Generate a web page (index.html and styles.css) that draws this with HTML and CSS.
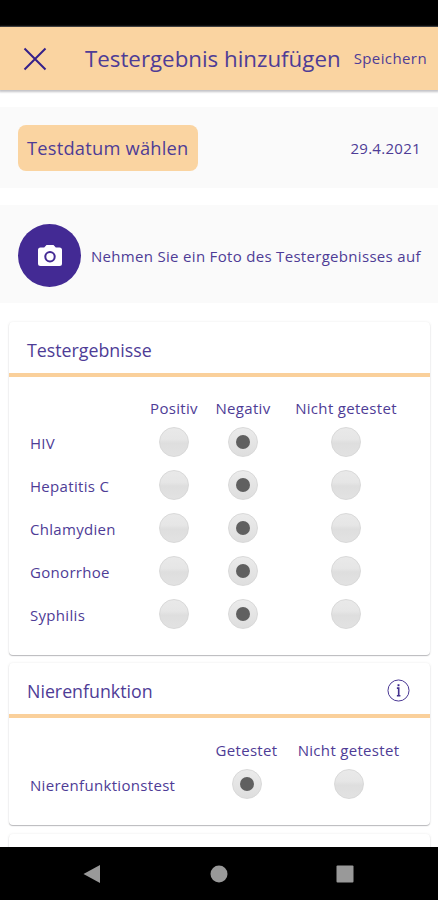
FILE: index.html
```html
<!DOCTYPE html>
<html lang="de">
<head>
<meta charset="utf-8">
<title>Testergebnis hinzufügen</title>
<link rel="stylesheet" href="styles.css">
</head>
<body>
<div class="phone">
  <div class="status"></div>
  <header class="bar">
    <svg class="close" viewBox="0 0 24 24"><path d="M1.500 1.500l21 21M22.500 1.500l-21 21"/></svg>
    <h1 class="title">Testergebnis hinzufügen</h1>
    <span class="save">Speichern</span>
  </header>
  <main class="content">
    <section class="strip date-row">
      <span class="pick">Testdatum wählen</span>
      <span class="date">29.4.2021</span>
    </section>
    <section class="strip photo-row">
      <span class="camera">
        <svg viewBox="0 0 26 24"><path fill-rule="evenodd" d="M9.500 1h7l2.300 2.500H22.500a2.500 2.500 0 0 1 2.500 2.500v13.500a2.500 2.500 0 0 1-2.500 2.500h-19a2.500 2.500 0 0 1-2.500-2.500V6a2.500 2.500 0 0 1 2.500-2.500h3.700zM13 7a5.700 5.700 0 1 0 0 11.400a5.700 5.700 0 0 0 0-11.400zM13 9a3.700 3.700 0 1 1 0 7.400a3.700 3.700 0 0 1 0-7.400z"/></svg>
      </span>
      <span class="photo-text">Nehmen Sie ein Foto des Testergebnisses auf</span>
    </section>
    <section class="card results">
      <div class="card-head"><h2>Testergebnisse</h2></div>
      <div class="grid grid3">
        <span></span><span class="col">Positiv</span><span class="col">Negativ</span><span class="col">Nicht getestet</span>
        <span class="label">HIV</span><i class="radio"></i><i class="radio on"></i><i class="radio"></i>
        <span class="label">Hepatitis C</span><i class="radio"></i><i class="radio on"></i><i class="radio"></i>
        <span class="label">Chlamydien</span><i class="radio"></i><i class="radio on"></i><i class="radio"></i>
        <span class="label">Gonorrhoe</span><i class="radio"></i><i class="radio on"></i><i class="radio"></i>
        <span class="label">Syphilis</span><i class="radio"></i><i class="radio on"></i><i class="radio"></i>
      </div>
    </section>
    <section class="card kidney">
      <div class="card-head"><h2>Nierenfunktion</h2>
        <svg class="info" viewBox="0 0 24 24"><circle cx="12" cy="12" r="11"/><path class="dot" d="M11 5.500h2v2h-2z"/><path class="stem" d="M10.300 9.500H12.200V17.500M10.300 17.500h3.700"/></svg>
      </div>
      <div class="grid grid2">
        <span></span><span class="col">Getestet</span><span class="col">Nicht getestet</span>
        <span class="label">Nierenfunktionstest</span><i class="radio on"></i><i class="radio"></i>
      </div>
    </section>
    <section class="card next"></section>
  </main>
  <nav class="nav">
    <svg viewBox="0 0 20 20"><path d="M1.500 10L18 1v18z"/></svg>
    <svg viewBox="0 0 20 20"><circle cx="10" cy="10" r="8.500"/></svg>
    <svg viewBox="0 0 20 20"><rect x="1.500" y="1.500" width="17" height="17" rx="1"/></svg>
  </nav>
</div>
</body>
</html>
```
FILE: styles.css
```css
* { box-sizing: border-box; }
body { margin: 0; background: #fff; font-family: "Open Sans", sans-serif; color: #4e3c96; }
h1, h2 { margin: 0; font-weight: 400; }
.phone { width: 438px; height: 900px; display: flex; flex-direction: column; overflow: hidden; white-space: nowrap; }
.status { height: 27px; background: #000; flex: none; }
.bar { height: 63px; flex: none; background: #fad4a1; display: flex; align-items: center; padding: 0 11px 0 23px; box-shadow: 0 1px 2px 1px #c4c4c8; }
.close { width: 24px; height: 24px; fill: none; stroke: #35208a; stroke-width: 2; }
.title { font-size: 22.3px; margin-left: 38px; line-height: 30px; }
.save { font-size: 15px; letter-spacing: .4px; margin-left: auto; padding-bottom: 2px; }
.content { flex: 1; min-height: 0; overflow: hidden; padding-top: 17px; }
.strip { background: #fafafa; display: flex; align-items: center; padding: 0 17px 0 18px; }
.date-row { height: 81px; margin-bottom: 17px; justify-content: space-between; }
.pick { width: 180px; height: 46px; border-radius: 8px; background: #fad4a1; font-size: 18.300px; letter-spacing: .22px; display: flex; align-items: center; padding-left: 9px; }
.date { font-size: 15px; letter-spacing: .3px; }
.photo-row { height: 98px; padding-top: 3px; }
.camera { width: 63px; height: 63px; border-radius: 50%; background: #432a94; display: flex; align-items: center; justify-content: center; }
.camera svg { width: 26px; height: 24px; fill: #fff; }
.photo-text { font-size: 15px; letter-spacing: .31px; margin-left: 10px; }
.card { margin: 0 8px 0 9px; border-radius: 4px; background: #fff; box-shadow: 0 1px 1px #b9b9bc, 0 0 3px rgba(0,0,0,.08); }
.results { height: 333px; margin-top: 19px; }
.card-head { border-bottom: 4px solid #fad09b; display: flex; align-items: center; justify-content: space-between; padding: 4px 20px 0 18px; height: 55px; }
.card-head h2 { font-size: 17.8px; }
.grid { display: grid; font-size: 15px; letter-spacing: .31px; padding-left: 21px; align-items: center; justify-items: center; }
.grid3 { grid-template: 26px repeat(5, 43px) / 109px 70px 68px 138px; padding-top: 17px; }
.grid2 { grid-template: 26px 43px / 180px 73px 131px; padding-top: 18px; }
.col { padding-top: 2px; }
.label { justify-self: start; padding-top: 2px; }
.radio { width: 30px; height: 30px; border-radius: 50%; border: 1px solid #d9d9d9; background: linear-gradient(#e9e9e9, #e6e6e6 40%, #dedede 54%, #e2e2e2); display: grid; place-items: center; }
.radio.on { background: linear-gradient(#ebebeb, #dedede); }
.radio.on::after { content: ""; width: 14px; height: 14px; border-radius: 50%; background: #606060; }
.kidney { height: 162px; margin-top: 8px; }
.info { width: 23px; height: 23px; fill: none; stroke: #43308f; stroke-width: 1; }
.info .stem { stroke-width: 1.7; }
.info .dot { fill: #35208a; stroke: none; }
.next { height: 60px; margin-top: 9px; }
.nav { height: 53px; flex: none; background: #000; display: flex; align-items: center; justify-content: space-between; padding: 0 83px 0 82px; }
.nav svg { width: 20px; height: 20px; fill: #999; }
```
